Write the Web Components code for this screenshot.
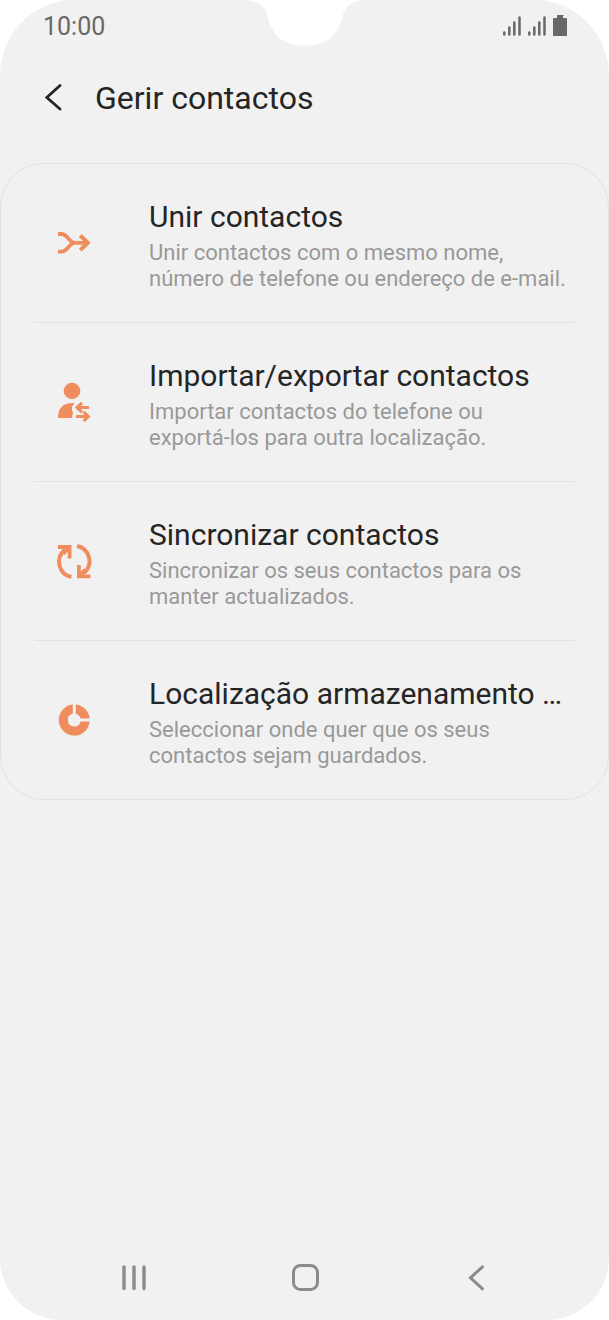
<!DOCTYPE html>
<html lang="pt">
<head>
<meta charset="utf-8">
<meta name="viewport" content="width=device-width, initial-scale=1">
<title>Gerir contactos</title>
<style>
body {
    margin: 0;
    background: #fff;
    font-family: Roboto, "Liberation Sans", sans-serif;
}

.nobreak {
    white-space: nowrap;
}
</style>
</head>
<body>

<phone-screen>
    <status-bar slot="status">10:00</status-bar>
    <app-header slot="header">Gerir contactos</app-header>
    <option-list>
        <option-item icon="merge">
            <span slot="title">Unir contactos</span>
            <span slot="text">Unir contactos com o mesmo nome, número de telefone ou endereço de e-mail.</span>
        </option-item>
        <option-item icon="transfer">
            <span slot="title">Importar/exportar contactos</span>
            <span slot="text">Importar contactos do telefone ou <span class="nobreak">exportá-los</span> para outra localização.</span>
        </option-item>
        <option-item icon="sync">
            <span slot="title">Sincronizar contactos</span>
            <span slot="text">Sincronizar os seus contactos para os manter actualizados.</span>
        </option-item>
        <option-item icon="storage">
            <span slot="title">Localização armazenamento …</span>
            <span slot="text">Seleccionar onde quer que os seus contactos sejam guardados.</span>
        </option-item>
    </option-list>
    <nav-bar slot="nav"></nav-bar>
</phone-screen>

<script>
// small helper, every element here clones its template the same way
function makeTemplate(html) {
    var template = document.createElement("template");
    template.innerHTML = html;
    return template;
}

// ---------- the screen, with rounded corners and camera notch ----------
var template_screen = makeTemplate(`
<style>
:host {
    display: flex;
    flex-direction: column;
    position: relative;
    min-height: 100vh;
    background: #f1f1f1;
    border-radius: 74px 74px 62px 62px / 76px 76px 62px 62px;
    overflow: hidden;
}

.notch {
    position: absolute;
    top: 0;
    left: 50%;
    transform: translateX(-50%);
    display: block;
}

main {
    flex: 1;
}
</style>

<svg class="notch" width="120" height="46" viewBox="0 0 120 46" aria-hidden="true">
    <path fill="#fff" d="M0 0C12 1 20 6 22 15C27 35 37 45.500 60 45.500C83 45.500 93 35 98 15C100 6 108 1 120 0Z"/>
</svg>
<slot name="status"></slot>
<slot name="header"></slot>
<main><slot></slot></main>
<slot name="nav"></slot>
`);

class PhoneScreen extends HTMLElement {
    constructor() {
        super();
        this.attachShadow({mode: "open"});
        this.shadowRoot.appendChild(template_screen.content.cloneNode(true));
    }
}
customElements.define("phone-screen", PhoneScreen);

// ---------- clock, signal and battery ----------
var template_status = makeTemplate(`
<style>
:host {
    display: flex;
    justify-content: space-between;
    align-items: center;
    height: 54px;
    padding: 0 42px 0 43px;
    color: #686868;
    font-size: 25px;
    line-height: 30px;
}

.icons {
    display: flex;
    align-items: center;
    gap: 7px;
}

svg {
    display: block;
}
</style>

<span><slot></slot></span>
<div class="icons">
    <svg width="18" height="24" viewBox="0 0 18 24" role="img" aria-label="Rede 1">
        <path d="M1.300 17.500v2M6.300 12.500v7M11.300 7.500v12M16.500 2.500v17" stroke="currentColor" stroke-width="2.500" stroke-linecap="round"/>
    </svg>
    <svg width="18" height="24" viewBox="0 0 18 24" role="img" aria-label="Rede 2">
        <path d="M1.300 17.500v2M6.300 12.500v7M11.300 7.500v12M16.500 2.500v17" stroke="currentColor" stroke-width="2.500" stroke-linecap="round"/>
    </svg>
    <svg width="14" height="24" viewBox="0 0 14 24" role="img" aria-label="Bateria">
        <path d="M4 0L12 -0.500L10 1V3H13Q14 3 14 4V20Q14 21 13 21H1Q0 21 0 20V4Q0 3 1 3H4Z" fill="currentColor"/>
    </svg>
</div>
`);

class StatusBar extends HTMLElement {
    constructor() {
        super();
        this.attachShadow({mode: "open"});
        this.shadowRoot.appendChild(template_status.content.cloneNode(true));
    }
}
customElements.define("status-bar", StatusBar);

// ---------- back button and page title ----------
var template_header = makeTemplate(`
<style>
:host {
    display: flex;
    align-items: center;
    gap: 16px;
    height: 88px;
    padding: 0 28px;
    color: #252525;
}

button {
    display: flex;
    justify-content: center;
    width: 51px;
    padding: 8px 0;
    border: 0;
    background: none;
    color: inherit;
}

h1 {
    margin: 0;
    font-size: 32px;
    line-height: 40px;
    font-weight: 400;
}
</style>

<button type="button" aria-label="Voltar">
    <svg width="18" height="28" viewBox="0 0 18 28">
        <path d="M15 1.500L1.800 13.500L15 25" fill="none" stroke="currentColor" stroke-width="2.800" stroke-linecap="round"/>
    </svg>
</button>
<h1><slot></slot></h1>
`);

class AppHeader extends HTMLElement {
    constructor() {
        super();
        this.attachShadow({mode: "open"});
        this.shadowRoot.appendChild(template_header.content.cloneNode(true));
    }
}
customElements.define("app-header", AppHeader);

// ---------- the outlined card ----------
var template_list = makeTemplate(`
<style>
:host {
    display: block;
    margin-top: 21px;
    padding: 0 33px;
    border: 1px solid #e2e2e2;
    border-radius: 44px;
}
</style>
<slot></slot>
`);

class OptionList extends HTMLElement {
    constructor() {
        super();
        this.attachShadow({mode: "open"});
        this.shadowRoot.appendChild(template_list.content.cloneNode(true));
    }
}
customElements.define("option-list", OptionList);

// ---------- one option: icon, title, description ----------
// icons are drawn in a 40x40 box
var ICONS = {
    merge: `
        <path d="M4 11H7.500C14 11 14.500 19.800 21 19.800H32M4 28.600H7.500C14 28.600 14.500 19.800 21 19.800" fill="none" stroke="currentColor" stroke-width="3.800"/>
        <path d="M26.300 12.500L33.800 19.800L26.300 27.100" fill="none" stroke="currentColor" stroke-width="4"/>`,
    transfer: `
        <circle cx="18" cy="9" r="8.300" fill="currentColor"/>
        <path d="M4 36C4 27 8 21 19 21H20.500C18 24 17 27 19 30.500L18 36Z" fill="currentColor"/>
        <path d="M35 25.500H23M28 20.800L23 25.500L28 30.200M22 34.500H34M29.500 29.800L34.500 34.500L29.500 39.200" fill="none" stroke="currentColor" stroke-width="3"/>`,
    sync: `
        <path d="M17.500 36A15.500 15.500 0 0 1 10.500 9M23 5A15.500 15.500 0 0 1 30 32" fill="none" stroke="currentColor" stroke-width="4"/>
        <path d="M4 4H17.500V17.500H13.700V10.800L10.500 14L7.600 11L10.800 7.900H4ZM23 24H26.800V30.500L30 27.300L33 30.200L29.800 33.400H36.500V37.300H23Z" fill="currentColor"/>`,
    storage: `
        <path d="M18.800 4.600V13.800A6.400 6.400 0 1 0 26.500 21.500H35.700A15.500 15.500 0 1 1 18.800 4.600Z" fill="currentColor"/>
        <path d="M21.800 4.600A15.500 15.500 0 0 1 35.700 18.500H26.500A6.400 6.400 0 0 0 21.800 13.800Z" fill="currentColor"/>`
};

var template_item = makeTemplate(`
<style>
:host {
    display: block;
    border-bottom: 1px solid #e2e2e2;
}

:host(:last-child) {
    border-bottom: 0;
}

button {
    display: flex;
    align-items: center;
    gap: 35px;
    width: 100%;
    padding: 0;
    border: 0;
    background: none;
    font: inherit;
    text-align: left;
}

.icon {
    display: flex;
    justify-content: center;
    flex: none;
    width: 80px;
    color: #f08d5f;
}

.body {
    flex: 1;
    min-width: 0;
    padding: 33px 0 30px;
}

.title {
    display: block;
    margin-bottom: 3px;
    color: #252525;
    font-size: 30px;
    line-height: 40px;
}

.text {
    display: block;
    color: #999;
    font-size: 22px;
    line-height: 26px;
}
</style>

<button type="button">
    <span class="icon"></span>
    <span class="body">
        <span class="title"><slot name="title"></slot></span>
        <span class="text"><slot name="text"></slot></span>
    </span>
</button>
`);

class OptionItem extends HTMLElement {
    constructor() {
        super();
        this.attachShadow({mode: "open"});
        this.shadowRoot.appendChild(template_item.content.cloneNode(true));
    }

    connectedCallback() {
        var shapes = ICONS[this.getAttribute("icon")] || "";
        this.shadowRoot.querySelector(".icon").innerHTML =
            `<svg width="40" height="40" viewBox="0 0 40 40" aria-hidden="true">${shapes}</svg>`;
    }
}
customElements.define("option-item", OptionItem);

// ---------- recents, home, back ----------
var template_nav = makeTemplate(`
<style>
:host {
    display: block;
    padding: 0 48px;
}

nav {
    display: grid;
    grid-template-columns: 1fr 1fr 1fr;
    height: 86px;
}

button {
    display: flex;
    justify-content: center;
    align-items: center;
    padding: 0;
    border: 0;
    background: none;
    color: #8b8b8b;
}
</style>

<nav>
    <button type="button" aria-label="Recentes">
        <svg width="28" height="28" viewBox="0 0 28 28">
            <path d="M4 4V25.500M14 4V25.500M24 4V25.500" stroke="currentColor" stroke-width="3.400" stroke-linecap="round"/>
        </svg>
    </button>
    <button type="button" aria-label="Início">
        <svg width="28" height="28" viewBox="0 0 28 28">
            <rect x="2.500" y="2.500" width="24" height="24" rx="7" fill="none" stroke="currentColor" stroke-width="3"/>
        </svg>
    </button>
    <button type="button" aria-label="Voltar">
        <svg width="28" height="28" viewBox="0 0 28 28">
            <path d="M20.500 3.800L8.500 14.800L20.500 25.800" fill="none" stroke="currentColor" stroke-width="3" stroke-linecap="round"/>
        </svg>
    </button>
</nav>
`);

class NavBar extends HTMLElement {
    constructor() {
        super();
        this.attachShadow({mode: "open"});
        this.shadowRoot.appendChild(template_nav.content.cloneNode(true));
    }
}
customElements.define("nav-bar", NavBar);
</script>
</body>
</html>
